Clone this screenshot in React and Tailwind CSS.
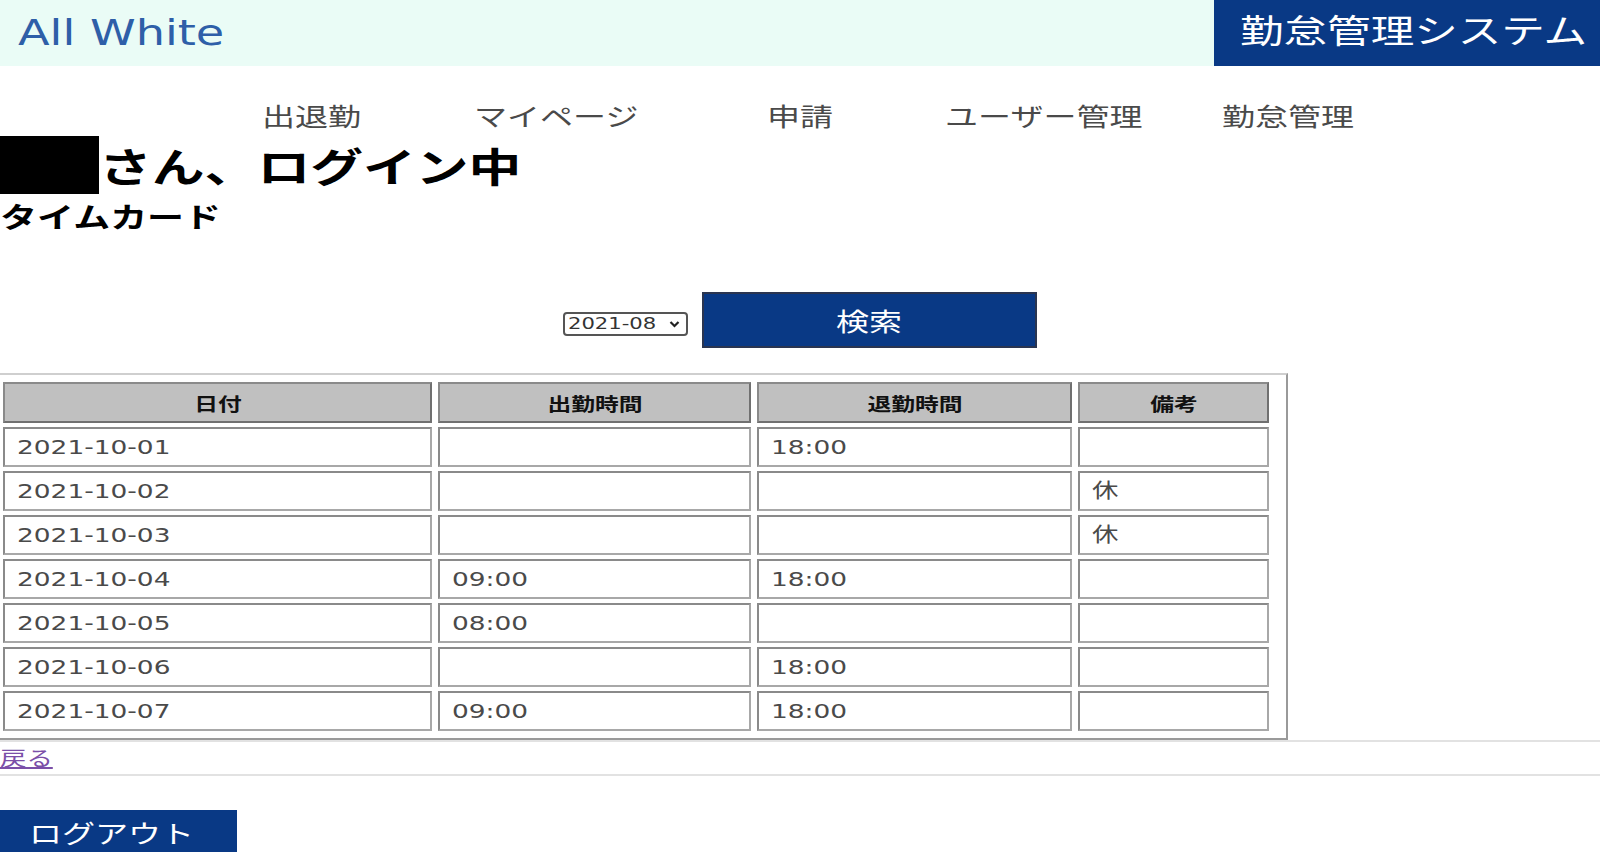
import React from 'react';

const jp = { fontFamily: '"Noto Sans CJK JP", "Noto Sans", sans-serif' };
const latin = { fontFamily: '"DejaVu Sans", "Noto Sans CJK JP", sans-serif' };

const navItems = ['出退勤', 'マイページ', '申請', 'ユーザー管理', '勤怠管理'];

const rows = [
  { date: '2021-10-01', start: '', end: '18:00', note: '' },
  { date: '2021-10-02', start: '', end: '', note: '休' },
  { date: '2021-10-03', start: '', end: '', note: '休' },
  { date: '2021-10-04', start: '09:00', end: '18:00', note: '' },
  { date: '2021-10-05', start: '08:00', end: '', note: '' },
  { date: '2021-10-06', start: '', end: '18:00', note: '' },
  { date: '2021-10-07', start: '09:00', end: '18:00', note: '' },
];

// the screenshot is stretched sideways, so the glyphs are widened
const Wide = ({ children, center, className = '' }) => (
  <span
    className={
      (center
        ? 'inline-block origin-center scale-x-[1.32] whitespace-nowrap '
        : 'inline-block origin-left scale-x-[1.32] whitespace-nowrap ') + className
    }
  >
    {children}
  </span>
);

const headers = [
  ['日付', 'w-[429px]'],
  ['出勤時間', 'w-[313px]'],
  ['退勤時間', 'w-[315px]'],
  ['備考', 'w-[191px]'],
];

const App = () => {
  return (
    <div className="w-[1600px] min-h-[852px] bg-white overflow-hidden" style={jp}>
      {/* Header */}
      <header className="flex h-[66px] bg-[#eafcf6]">
        <div className="flex flex-1 items-center pl-[18px]">
          <span className="text-[35px] text-[#2e5fa8]" style={latin}>
            <Wide>All White</Wide>
          </span>
        </div>
        <div className="flex w-[386px] items-center bg-[#093985] pl-[26px] pb-[8px]">
          <span className="text-[33px] leading-none text-white">
            <Wide>勤怠管理システム</Wide>
          </span>
        </div>
      </header>

      {/* Navigation */}
      <nav className="mt-[32px] flex h-[34px] items-center pl-[190px]">
        {navItems.map((item) => (
          <a key={item} className="w-[244px] text-center text-[25px] leading-none text-[#4a4a4a]">
            <Wide center>{item}</Wide>
          </a>
        ))}
      </nav>

      {/* Greeting */}
      <h1 className="mt-[4px] flex h-[58px] items-center text-[40px] font-bold leading-none text-black">
        <span className="inline-block h-[58px] w-[99px] bg-black" />
        <Wide>さん、ログイン中</Wide>
      </h1>
      <h2 className="mt-[6px] text-[28px] font-bold leading-[32px] text-black">
        <Wide>タイムカード</Wide>
      </h2>

      {/* Search */}
      <div className="mt-[60px] flex h-[56px] items-center justify-center gap-[14px]">
        <div className="mt-[8px] flex h-[24px] w-[125px] items-center justify-between rounded-[4px] border-2 border-[#555] bg-white pl-[3px] pr-[6px]">
          <span className="text-[16px] leading-none text-[#333]" style={latin}>
            <Wide>2021-08</Wide>
          </span>
          <svg width="11" height="8" viewBox="0 0 11 8" className="shrink-0">
            <path d="M1.5 2 L5.5 6 L9.5 2" fill="none" stroke="#222" strokeWidth="2.2" />
          </svg>
        </div>
        <button className="flex h-[56px] w-[335px] items-center justify-center border-2 border-[#2a3550] bg-[#093985] text-[25px] leading-none text-white">
          <Wide center>検索</Wide>
        </button>
      </div>

      {/* Time card table */}
      <div className="-ml-[8px] mt-[25px] w-[1296px] border-2 border-t-[#cfcfcf] border-l-[#cfcfcf] border-b-[#9a9a9a] border-r-[#9a9a9a] pl-[3px] py-[3px]">
        <table className="w-[1278px] table-fixed border-separate border-spacing-x-[6px] border-spacing-y-[4px]">
          <thead>
            <tr>
              {headers.map(([label, w]) => (
                <th
                  key={label}
                  className={`${w} h-[41px] border-2 border-t-[#8a8a8a] border-l-[#8a8a8a] border-b-[#707070] border-r-[#707070] bg-[#c0c0c0] text-center align-middle text-[18px] font-bold leading-none text-[#111]`}
                >
                  <Wide center>{label}</Wide>
                </th>
              ))}
            </tr>
          </thead>
          <tbody>
            {rows.map((r) => (
              <tr key={r.date}>
                {[r.date, r.start, r.end, r.note].map((v, i) => (
                  <td
                    key={i}
                    className="h-[40px] border-2 border-t-[#8a8a8a] border-l-[#8a8a8a] border-b-[#a8a8a8] border-r-[#a8a8a8] px-[12px] align-middle text-[20px] leading-none text-[#4a4a4a]"
                    style={latin}
                  >
                    {v && <Wide>{v}</Wide>}
                  </td>
                ))}
              </tr>
            ))}
          </tbody>
        </table>
      </div>

      {/* Back link */}
      <div className="flex h-[36px] items-center border-y-2 border-[#e2e2e2]">
        <a className="text-[20px] leading-none text-[#7b4fa8]">
          <Wide className="underline">戻る</Wide>
        </a>
      </div>

      {/* Logout */}
      <button className="mt-[34px] flex h-[44px] w-[237px] items-center justify-center bg-[#093985] pr-[14px] text-[25px] leading-none text-white">
        <Wide center>ログアウト</Wide>
      </button>
    </div>
  );
};

export default App;
